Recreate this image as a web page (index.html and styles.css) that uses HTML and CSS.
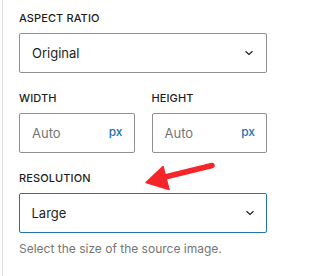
FILE: index.html
```html
<!DOCTYPE html>
<html>
<head>
<meta charset="utf-8">
<link rel="stylesheet" href="styles.css">
</head>
<body>
<div class="panel">
  <div class="field">
    <div class="label">Aspect ratio</div>
    <div class="select">
      <span class="value">Original</span>
      <svg class="chev" width="10" height="6" viewBox="0 0 10 6"><path d="M1.5 1.2 L5 4.4 L8.5 1.2" fill="none" stroke="#1e1e1e" stroke-width="1.2"/></svg>
    </div>
  </div>
  <div class="row">
    <div class="field">
      <div class="label">Width</div>
      <div class="input"><span class="ph">Auto</span><span class="unit">px</span></div>
    </div>
    <div class="field">
      <div class="label">Height</div>
      <div class="input"><span class="ph">Auto</span><span class="unit">px</span></div>
    </div>
  </div>
  <div class="field">
    <div class="label">Resolution</div>
    <div class="select focused">
      <span class="value">Large</span>
      <svg class="chev" width="10" height="6" viewBox="0 0 10 6"><path d="M1.5 1.2 L5 4.4 L8.5 1.2" fill="none" stroke="#1e1e1e" stroke-width="1.2"/></svg>
    </div>
    <p class="help">Select the size of the source image.</p>
  </div>
</div>
<svg class="arrow" width="283" height="276" viewBox="0 0 283 276">
  <line x1="212" y1="165.5" x2="163" y2="177.5" stroke="#f5262a" stroke-width="5.5" stroke-linecap="round"/>
  <polygon points="146,182.5 163,166.5 169,189.5" fill="#f5262a" stroke="#f5262a" stroke-width="1.5" stroke-linejoin="round"/>
</svg>
</body>
</html>
```

FILE: styles.css
```css
html, body {
  margin: 0;
  padding: 0;
  background: #fff;
}
body {
  width: 283px;
  height: 276px;
  position: relative;
  overflow: hidden;
  font-family: Inter, "Open Sans", sans-serif;
  color: #1e1e1e;
}
.panel {
  margin-left: 2px;
  border-left: 1px solid #e0e0e0;
  border-bottom: 1px solid #e0e0e0;
  padding: 10px 16px 22px 16px;
  display: flex;
  flex-direction: column;
  gap: 17px;
}
.field {
  display: flex;
  flex-direction: column;
}
.label {
  font-size: 11px;
  font-weight: 500;
  text-transform: uppercase;
  line-height: 16px;
  margin-bottom: 7px;
  letter-spacing: 0.1px;
}
.select {
  box-sizing: border-box;
  height: 40px;
  border: 1px solid #8c8f94;
  border-radius: 2px;
  display: flex;
  align-items: center;
  justify-content: space-between;
  padding: 0 12px 0 12px;
  font-size: 13px;
}
.select.focused {
  border: 1.5px solid #2271b1;
  padding-left: 11.5px;
  padding-right: 11.5px;
}
.chev {
  display: block;
}
.row {
  display: grid;
  grid-template-columns: 1fr 1fr;
  gap: 17px;
}
.input {
  box-sizing: border-box;
  height: 40px;
  border: 1px solid #8c8f94;
  border-radius: 2px;
  display: flex;
  align-items: center;
  justify-content: space-between;
  padding: 0 11px 0 12px;
  font-size: 13px;
}
.ph {
  color: #757575;
}
.unit {
  color: #2271b1;
  font-size: 12px;
  font-weight: 500;
  margin-top: -4px;
}
.help {
  margin: 8px 0 0 0;
  font-size: 12px;
  line-height: 16px;
  color: #757575;
}
.arrow {
  position: absolute;
  left: 0;
  top: 0;
  pointer-events: none;
}
```
